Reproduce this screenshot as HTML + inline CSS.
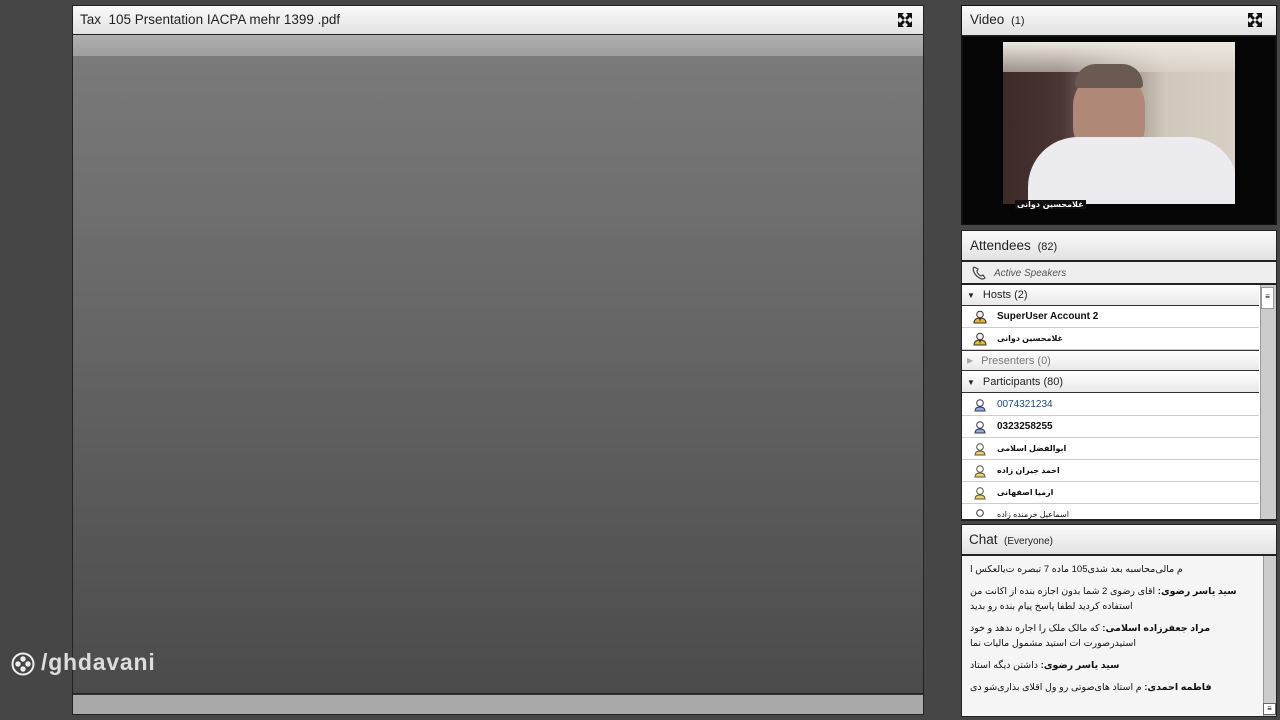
<!DOCTYPE html>
<html><head><meta charset="utf-8"><style>
*{margin:0;padding:0;box-sizing:border-box}
body{width:1280px;height:720px;background:#464646;font-family:"Liberation Sans","DejaVu Sans",sans-serif;position:relative;overflow:hidden}
.abs{position:absolute}
.hdr{background:linear-gradient(#fafafa,#e2e2e2);border-bottom:1px solid #222;color:#222}
.fs{position:absolute;width:16px;height:16px}
.row{position:absolute;left:0;width:297px;height:22px;border-bottom:1px solid #ccc;background:#fff;font-size:10px;color:#111;display:flex;align-items:center}
.row .ic{width:14px;height:14px;margin:0 10px 0 11px}
.sec{position:absolute;left:0;width:297px;height:21px;background:linear-gradient(#fff,#e8e8e8);border-bottom:1px solid #333;font-size:11px;color:#222;display:flex;align-items:center}
.chat p{font-size:9.5px;color:#111;line-height:15px;margin-bottom:7px;direction:rtl;text-align:left;font-family:"Liberation Sans","DejaVu Sans",sans-serif}
</style></head><body>
<div class="abs" style="left:72px;top:5px;width:852px;height:710px;background:#222"></div>
<div class="abs hdr" style="left:73px;top:6px;width:850px;height:29px;font-size:13.5px;padding:6px 0 0 7px">Tax&nbsp; 105 Prsentation IACPA mehr 1399 .pdf</div>
<svg class="fs" style="left:897px;top:12px" viewBox="0 0 16 16"><path d="M1 1h6L5 3l3 3-2 2-3-3-2 2zM15 1v6l-2-2-3 3-2-2 3-3-2-2zM1 15V9l2 2 3-3 2 2-3 3 2 2zM15 15H9l2-2-3-3 2-2 3 3 2-2z" fill="#111"/></svg>
<div class="abs" style="left:73px;top:35px;width:850px;height:21px;background:linear-gradient(#b0b0b0,#9e9e9e)"></div>
<div class="abs" style="left:73px;top:56px;width:850px;height:637px;background:linear-gradient(#7a7a7a,#4b4b4b)"></div>
<div class="abs" style="left:73px;top:694px;width:850px;height:20px;background:#a9a9a9;border-top:1px solid #333"></div>
<svg class="abs" style="left:11px;top:652px" width="24" height="24" viewBox="0 0 24 24"><circle cx="12" cy="12" r="10.5" fill="none" stroke="#eee" stroke-width="2"/><circle cx="12" cy="7" r="2.7" fill="#eee"/><circle cx="7" cy="12" r="2.7" fill="#eee"/><circle cx="17" cy="12" r="2.7" fill="#eee"/><circle cx="12" cy="17" r="2.7" fill="#eee"/></svg>
<div class="abs" style="left:41px;top:649px;font-size:23px;color:#ddd;font-weight:bold;letter-spacing:0.8px">/ghdavani</div>
<div class="abs" style="left:961px;top:5px;width:316px;height:220px;background:#111"></div>
<div class="abs hdr" style="left:962px;top:6px;width:314px;height:30px;font-size:13.5px;padding:6px 0 0 8px">Video <span style="font-size:11px">&nbsp;(1)</span></div>
<svg class="fs" style="left:1247px;top:12px" viewBox="0 0 16 16"><path d="M1 1h6L5 3l3 3-2 2-3-3-2 2zM15 1v6l-2-2-3 3-2-2 3-3-2-2zM1 15V9l2 2 3-3 2 2-3 3 2 2zM15 15H9l2-2-3-3 2-2 3 3 2-2z" fill="#111"/></svg>
<div class="abs" style="left:963px;top:37px;width:312px;height:187px;background:#050505"></div>
<div class="abs" style="left:1003px;top:42px;width:232px;height:162px;background:linear-gradient(90deg,#3a2a28 0%,#4a3634 25%,#8a7a70 45%,#d0c8bc 70%,#d8d0c4 100%);overflow:hidden">
 <div class="abs" style="left:0;top:0;width:232px;height:30px;background:linear-gradient(#ece8e0,rgba(220,214,204,0.6))"></div>
 <div class="abs" style="left:70px;top:28px;width:72px;height:92px;border-radius:36px;background:#b08878"></div>
 <div class="abs" style="left:72px;top:22px;width:68px;height:24px;border-radius:30px 30px 5px 5px;background:#6a5a52"></div>
 <div class="abs" style="left:25px;top:95px;width:210px;height:70px;border-radius:50px 50px 0 0;background:#ecebef"></div>
</div>
<div class="abs" style="left:1015px;top:200px;font-size:8px;color:#fff;font-weight:bold;font-family:'DejaVu Sans',sans-serif;background:#111;padding:0 2px">غلامحسین دوانی</div>
<div class="abs" style="left:961px;top:230px;width:316px;height:291px;background:#222"></div>
<div class="abs hdr" style="left:962px;top:231px;width:314px;height:30px;font-size:13.5px;padding:7px 0 0 8px">Attendees <span style="font-size:11px">&nbsp;(82)</span></div>
<div class="abs" style="left:962px;top:262px;width:314px;height:22px;background:#eee;border-bottom:1px solid #222;font-size:10px;font-style:italic;color:#555;padding:6px 0 0 32px">Active Speakers</div>
<svg class="abs" style="left:971px;top:265px" width="16" height="16" viewBox="0 0 16 16"><path d="M3 2c-2 2 0 7 4 10s6 2 7 1l-2-3-2 1c-2-1-4-3-4-5l1-2z" fill="none" stroke="#444" stroke-width="1.2"/></svg>
<div class="abs" style="left:962px;top:285px;width:314px;height:234px;background:#fff;overflow:hidden">
 <div class="sec" style="top:0"><span style="font-size:8px;margin:0 8px 0 5px">▼</span>Hosts (2)</div>
 <div class="row" style="top:21px"><svg class="ic" viewBox="0 0 14 14"><circle cx="7" cy="4.5" r="3.3" fill="#eee" stroke="#333"/><path d="M1 13c0-4 3-5 6-5s6 1 6 5z" fill="#e8b830" stroke="#333"/><path d="M6 8h2l-1 4z" fill="#222"/></svg><span style="font-weight:bold">SuperUser Account 2</span></div>
 <div class="row" style="top:43px"><svg class="ic" viewBox="0 0 14 14"><circle cx="7" cy="4.5" r="3.3" fill="#eee" stroke="#333"/><path d="M1 13c0-4 3-5 6-5s6 1 6 5z" fill="#e8b830" stroke="#333"/><path d="M6 8h2l-1 4z" fill="#222"/></svg><span style="font-size:8px;font-weight:bold">غلامحسین دوانی</span></div>
 <div class="sec" style="top:65px;color:#777;border-top:1px solid #333"><span style="font-size:8px;margin:0 8px 0 5px;color:#aaa">▶</span>Presenters (0)</div>
 <div class="sec" style="top:87px"><span style="font-size:8px;margin:0 8px 0 5px">▼</span>Participants (80)</div>
 <div class="row" style="top:109px"><svg class="ic" viewBox="0 0 14 14"><circle cx="7" cy="5" r="3.3" fill="#fff" stroke="#335"/><path d="M2 13c0-3 2-4 5-4s5 1 5 4z" fill="#8ab0e0" stroke="#335"/></svg><span style="color:#1c4a80">0074321234</span></div>
 <div class="row" style="top:131px"><svg class="ic" viewBox="0 0 14 14"><circle cx="7" cy="5" r="3.3" fill="#fff" stroke="#335"/><path d="M2 13c0-3 2-4 5-4s5 1 5 4z" fill="#8ab0e0" stroke="#335"/></svg><span style="font-weight:bold">0323258255</span></div>
 <div class="row" style="top:153px"><svg class="ic" viewBox="0 0 14 14"><circle cx="7" cy="5" r="3.3" fill="#fff" stroke="#553"/><path d="M2 13c0-3 2-4 5-4s5 1 5 4z" fill="#f0d070" stroke="#553"/></svg><span style="font-size:8px;font-weight:bold">ابوالفضل اسلامی</span></div>
 <div class="row" style="top:175px"><svg class="ic" viewBox="0 0 14 14"><circle cx="7" cy="5" r="3.3" fill="#fff" stroke="#553"/><path d="M2 13c0-3 2-4 5-4s5 1 5 4z" fill="#f0d070" stroke="#553"/></svg><span style="font-size:8px;font-weight:bold">احمد جیران زاده</span></div>
 <div class="row" style="top:197px"><svg class="ic" viewBox="0 0 14 14"><circle cx="7" cy="5" r="3.3" fill="#fff" stroke="#553"/><path d="M2 13c0-3 2-4 5-4s5 1 5 4z" fill="#f0d070" stroke="#553"/></svg><span style="font-size:8px;font-weight:bold">ارمیا اصفهانی</span></div>
 <div class="row" style="top:219px"><svg class="ic" viewBox="0 0 14 14"><circle cx="7" cy="5" r="3.3" fill="#fff" stroke="#333"/></svg><span style="font-size:8px">اسماعیل خرمنده زاده</span></div>
 <div class="abs" style="left:298px;top:0;width:16px;height:234px;background:#ccc;border-left:1px solid #999"></div>
 <div class="abs" style="left:299px;top:2px;width:13px;height:22px;background:#fff;border:1px solid #999;font-size:8px;text-align:center;line-height:18px">≡</div>
</div>
<div class="abs" style="left:961px;top:524px;width:316px;height:193px;background:#222"></div>
<div class="abs hdr" style="left:962px;top:525px;width:314px;height:30px;font-size:13.5px;padding:7px 0 0 7px">Chat <span style="font-size:10px">&nbsp;(Everyone)</span></div>
<div class="abs chat" style="left:962px;top:556px;width:301px;height:160px;background:#f5f5f5;padding:6px 8px 0 8px">
 <p>م مالی‌محاسبه بعد شد‌ی105 ماده 7 تبصره ت‌یالعکس ا</p>
 <p><b>سید یاسر رضوی:</b> اقای رضوی 2 شما بدون اجازه بنده از اکانت من استفاده کردید لطفا پاسخ پیام بنده رو بدید</p>
 <p><b>مراد جعفرزاده اسلامی:</b> که مالک ملک را اجاره ندهد و خود استیدرصورت ات استید مشمول مالیات نما</p>
 <p><b>سید یاسر رضوی:</b> داشتن دیگه استاد</p>
 <p><b>فاطمه احمدی:</b> م استاد های‌صوتی رو ول اقلای بذاری‌شو دی</p>
</div>
<div class="abs" style="left:1263px;top:556px;width:13px;height:160px;background:#ccc;border-left:1px solid #999"></div>
<div class="abs" style="left:1263px;top:703px;width:13px;height:12px;background:#fff;border:1px solid #666;font-size:8px;text-align:center;line-height:10px">≡</div>
</body></html>
